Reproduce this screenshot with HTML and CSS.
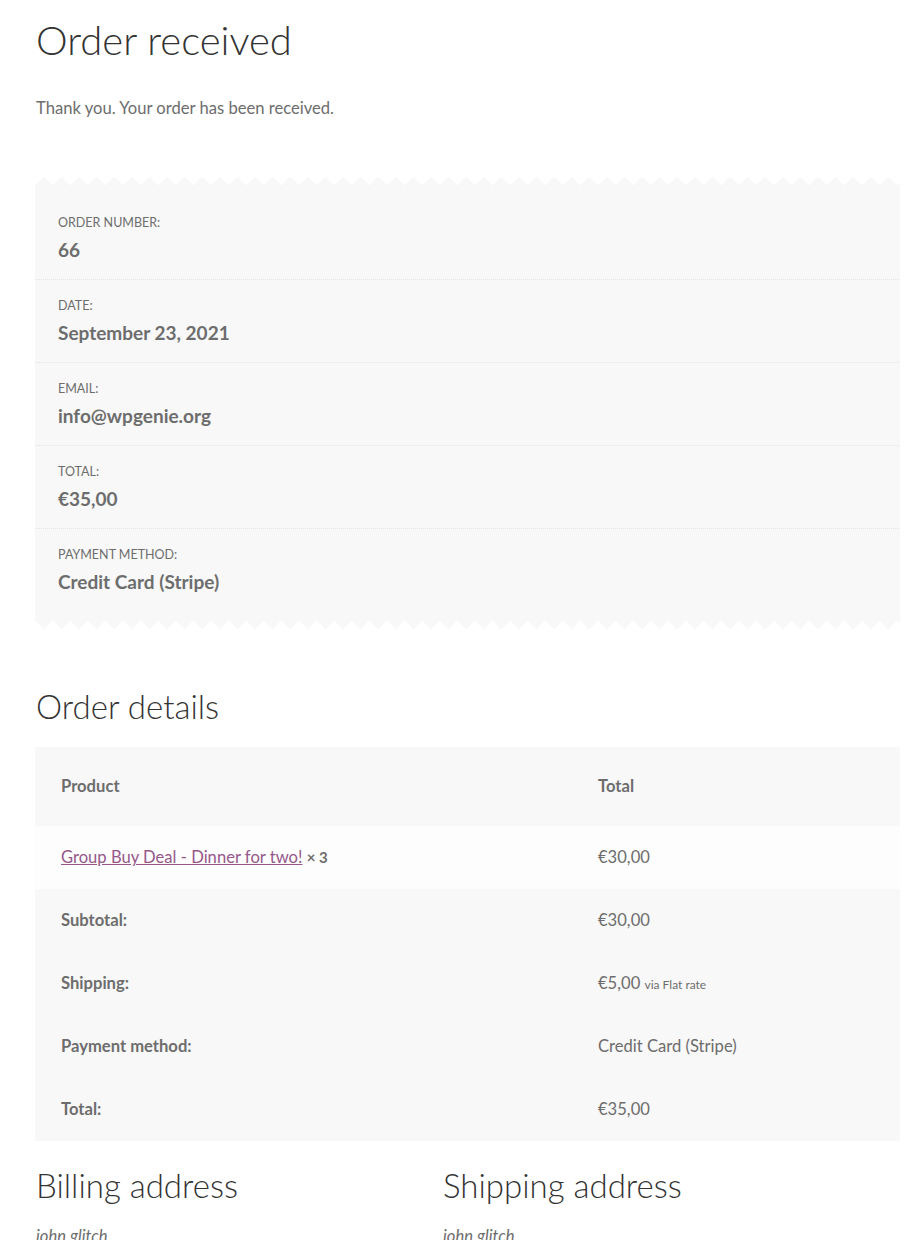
FILE: index.html
```html
<!DOCTYPE html>
<html>
<head>
  <link rel="stylesheet" href="styles.css">
</head>
<body>
  <div class="site-content">
    <h1 class="entry-title">Order received</h1>

    <p class="thankyou">Thank you. Your order has been received.</p>

    <ul class="order-overview">
      <li>
        <span class="label">Order number:</span>
        <strong>66</strong>
      </li>
      <li>
        <span class="label">Date:</span>
        <strong>September 23, 2021</strong>
      </li>
      <li>
        <span class="label">Email:</span>
        <strong>info@wpgenie.org</strong>
      </li>
      <li>
        <span class="label">Total:</span>
        <strong>&euro;35,00</strong>
      </li>
      <li>
        <span class="label">Payment method:</span>
        <strong>Credit Card (Stripe)</strong>
      </li>
    </ul>

    <section class="order-details">
      <h2>Order details</h2>
      <table class="details-table">
        <thead>
          <tr>
            <th class="col-product">Product</th>
            <th class="col-total">Total</th>
          </tr>
        </thead>
        <tbody>
          <tr class="item-row">
            <td><a href="#">Group Buy Deal - Dinner for two!</a> <strong class="qty">&times;&nbsp;3</strong></td>
            <td>&euro;30,00</td>
          </tr>
        </tbody>
        <tfoot>
          <tr>
            <th>Subtotal:</th>
            <td>&euro;30,00</td>
          </tr>
          <tr>
            <th>Shipping:</th>
            <td>&euro;5,00 <small class="via">via Flat rate</small></td>
          </tr>
          <tr>
            <th>Payment method:</th>
            <td>Credit Card (Stripe)</td>
          </tr>
          <tr>
            <th>Total:</th>
            <td>&euro;35,00</td>
          </tr>
        </tfoot>
      </table>
    </section>

    <section class="addresses">
      <div class="address-col">
        <h2>Billing address</h2>
        <address>john glitch</address>
      </div>
      <div class="address-col">
        <h2>Shipping address</h2>
        <address>john glitch</address>
      </div>
    </section>
  </div>
</body>
</html>
```

FILE: styles.css
```css
/* Order received page */
body {
  margin: 0;
  background: #fff;
  color: #6d6d6d;
  font-family: "Lato", "Liberation Sans", sans-serif;
  font-size: 16.6px;
  line-height: 1.618;
}

.site-content {
  width: 865px;
  padding-left: 35px;
}

h1, h2 {
  font-weight: 300;
  color: #333;
  margin: 0;
}

.entry-title {
  font-size: 40px;
  line-height: 1.2;
  padding-left: 1px;
  padding-top: 16px;
}

.thankyou {
  margin: 31px 0 0 1px;
}

/* overview box with zigzag edges */
.order-overview {
  list-style: none;
  margin: 64px 0 0;
  padding: 11px 0 8px;
  background: #f8f8f8;
  position: relative;
}

.order-overview::before,
.order-overview::after {
  content: "";
  position: absolute;
  left: 0;
  right: 0;
  height: 9px;
  background-size: 17.6px 9px;
  background-repeat: repeat-x;
}

.order-overview::before {
  top: -9px;
  background-image: conic-gradient(from 135deg at 50% 0, #f8f8f8 0 90deg, transparent 90deg);
}

.order-overview::after {
  bottom: -9px;
  background-image: conic-gradient(from -45deg at 50% 100%, #f8f8f8 0 90deg, transparent 90deg);
}

.order-overview li {
  padding: 17px 23px 14px;
  border-bottom: 1px dotted #e4e4e4;
  font-size: 12.5px;
  text-transform: uppercase;
  line-height: 1.5;
}

.order-overview li:last-child {
  border-bottom: none;
}

.order-overview .label {
  display: block;
}

.order-overview strong {
  display: block;
  text-transform: none;
  font-size: 19px;
  line-height: 1.6;
  margin-top: 2px;
  color: #6d6d6d;
}

/* order details table */
.order-details {
  margin-top: 67px;
}

.order-details h2 {
  font-size: 33px;
  line-height: 1.2;
  margin-left: 1px;
}

.details-table {
  width: 100%;
  border-collapse: collapse;
  margin-top: 21px;
}

.details-table th,
.details-table td {
  text-align: left;
  padding: 16px 26px;
  vertical-align: middle;
}

.details-table th {
  font-weight: 700;
}

.details-table thead th {
  background: #f8f8f8;
  padding-top: 26px;
  padding-bottom: 26px;
}

.details-table .col-product {
  width: 485px;
}

.details-table tbody td {
  background: #fdfdfd;
  height: 31px;
}

.details-table tfoot th,
.details-table tfoot td {
  background: #f8f8f8;
  height: 31px;
}

.details-table a {
  color: #96588a;
  text-decoration: underline;
}

.qty {
  font-size: 15px;
}

.via {
  font-size: 12px;
}

/* addresses */
.addresses {
  display: grid;
  grid-template-columns: 407px 1fr;
  margin-top: 25px;
}

.addresses h2 {
  font-size: 33px;
  line-height: 1.2;
  margin-left: 1px;
}

.addresses address {
  font-style: italic;
  margin: 17px 0 0 1px;
}
```
